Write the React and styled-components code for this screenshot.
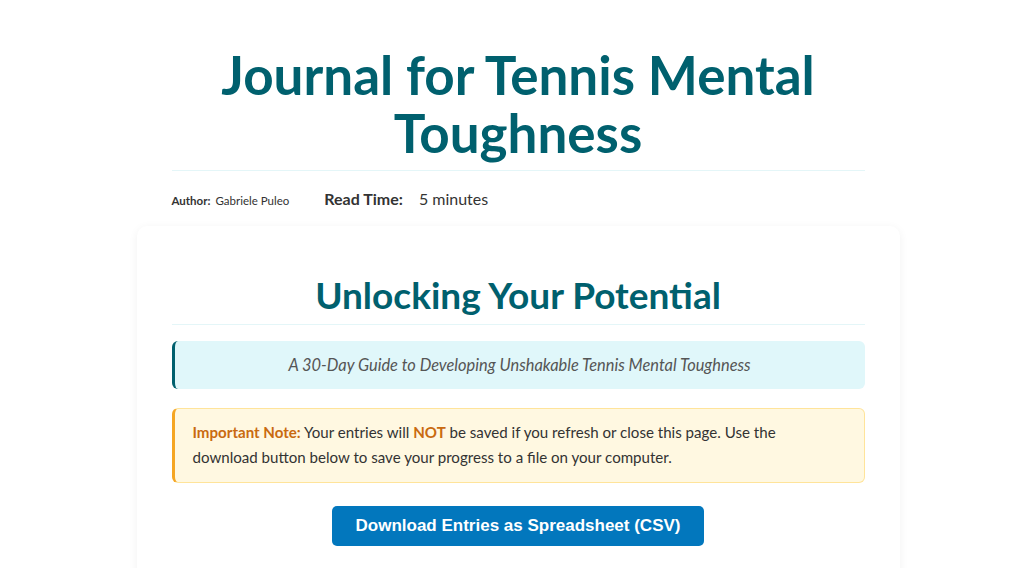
import React from "react";
import styled, { createGlobalStyle } from "styled-components";

const Global = createGlobalStyle`
  html, body { margin: 0; padding: 0; background: #ffffff; }
  body { font-family: Lato, "Open Sans", sans-serif; color: #333; }
`;

const Page = styled.div`
  max-width: 763px;
  margin: 0 auto;
  padding-top: 46px;
`;

const Header = styled.header`
  padding: 0 35px;
`;

const Title = styled.h1`
  margin: 0;
  font-size: 53px;
  line-height: 58px;
  font-weight: 700;
  color: #00606e;
  text-align: center;
  padding-bottom: 8px;
  border-bottom: 1px solid #e4f6f8;
`;

const Meta = styled.div`
  display: flex;
  align-items: baseline;
  gap: 35px;
  padding: 18px 0 0 0;
`;

const MetaItem = styled.div`
  display: flex;
  align-items: baseline;
  gap: ${(p) => (p.$large ? "16px" : "5px")};
  font-size: ${(p) => (p.$large ? "16px" : "11.5px")};
  color: #333;
`;

const MetaLabel = styled.span`
  font-weight: 700;
`;

const Card = styled.section`
  margin-top: 18px;
  background: #fff;
  border-radius: 10px;
  box-shadow: 0 2px 10px rgba(0, 0, 0, 0.06);
  padding: 48px 35px 40px;
`;

const SectionTitle = styled.h2`
  margin: 0;
  font-size: 37px;
  line-height: 42px;
  font-weight: 700;
  color: #00606e;
  text-align: center;
  padding-bottom: 8px;
  border-bottom: 1px solid #e4f6f8;
`;

const Subtitle = styled.div`
  margin-top: 16px;
  background: #e0f7fa;
  border-left: 3px solid #00606e;
  border-radius: 6px;
  padding: 13px 16px 14px;
  text-align: center;
  font-style: italic;
  font-size: 16.4px;
  line-height: 21px;
  color: #555;
`;

const Note = styled.div`
  margin-top: 19px;
  background: #fff8e1;
  border: 1px solid #ffe49a;
  border-left: 3px solid #f5a623;
  border-radius: 6px;
  padding: 11px 40px 12px 18px;
  font-size: 15.1px;
  line-height: 25px;
  color: #333;
`;

const Strong = styled.strong`
  color: #c96a10;
  font-weight: 700;
`;

const ButtonRow = styled.div`
  display: flex;
  justify-content: center;
  margin-top: 23px;
`;

const Button = styled.button`
  font-family: "Liberation Sans", Arial, sans-serif;
  font-weight: 700;
  font-size: 17px;
  color: #fff;
  background: #0277bd;
  border: none;
  border-radius: 5px;
  padding: 0 24px;
  height: 40px;
  cursor: pointer;
`;

export default function App() {
  return (
    <>
      <Global />
      <Page>
        <Header>
          <Title>Journal for Tennis Mental Toughness</Title>
          <Meta>
            <MetaItem>
              <MetaLabel>Author:</MetaLabel>
              <span>Gabriele Puleo</span>
            </MetaItem>
            <MetaItem $large>
              <MetaLabel>Read Time:</MetaLabel>
              <span>5 minutes</span>
            </MetaItem>
          </Meta>
        </Header>
        <Card>
          <SectionTitle>Unlocking Your Potential</SectionTitle>
          <Subtitle>
            A 30-Day Guide to Developing Unshakable Tennis Mental Toughness
          </Subtitle>
          <Note>
            <Strong>Important Note:</Strong> Your entries will{" "}
            <Strong>NOT</Strong> be saved if you refresh or close this page.
            Use the download button below to save your progress to a file on
            your computer.
          </Note>
          <ButtonRow>
            <Button>Download Entries as Spreadsheet (CSV)</Button>
          </ButtonRow>
        </Card>
      </Page>
    </>
  );
}
